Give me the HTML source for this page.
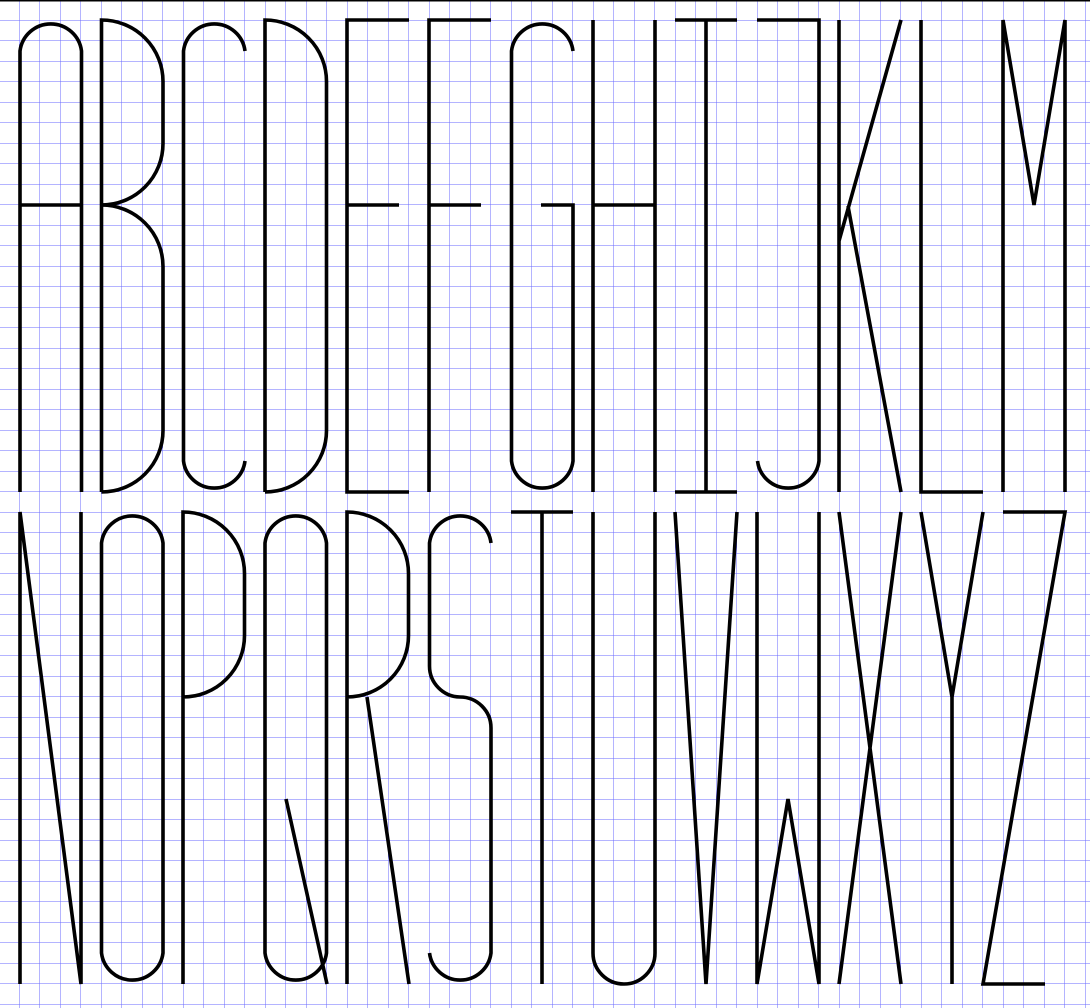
<!DOCTYPE html>
<html><head><meta charset="utf-8"><style>
html,body{margin:0;padding:0;background:#fff;width:1090px;height:1008px;overflow:hidden}
svg{display:block}
</style></head><body>
<svg width="1090" height="1008" viewBox="0 0 1090 1008" xmlns="http://www.w3.org/2000/svg">
<defs>
<pattern id="g" x="19" y="20" width="20.5" height="20.5" patternUnits="userSpaceOnUse">
<path d="M0 0V20.5M0 0H20.5" stroke="#6a6aff" stroke-width="1" fill="none"/>
</pattern>
</defs>
<rect width="1090" height="1008" fill="#fff"/>
<rect width="1090" height="1008" fill="url(#g)"/>
<rect x="0" y="0" width="1090" height="1.5" fill="#000"/>
<g fill="none" stroke="#000" stroke-width="3.6" stroke-linejoin="miter">
<path d="M20 492V51A31 31 0 0 1 81.5 51V492M20 205H81.5"/>
<path d="M101.5 492V20A61.5 61.5 0 0 1 163 81.5V143.5A61.5 61.5 0 0 1 101.5 205A61.5 61.5 0 0 1 163 266.5V430.5A61.5 61.5 0 0 1 101.5 492"/>
<path d="M245 51A31 31 0 0 0 183.5 51V461A31 31 0 0 0 245 461"/>
<path d="M265 492V20A61.5 61.5 0 0 1 326.5 81.5V430.5A61.5 61.5 0 0 1 265 492"/>
<path d="M409 20H347V492H409M347 205H399"/>
<path d="M491 20H429V492M429 205H481"/>
<path d="M573 51A31 31 0 0 0 511.5 51V461A31 31 0 0 0 573 461V205H541"/>
<path d="M593 20V492M655 20V492M593 205H655"/>
<path d="M675 20H737M675 492H737M706 20V492"/>
<path d="M757 20H819V461A31 31 0 0 1 757.5 461"/>
<path d="M839 20V492M901 20L839 241M848 206L901 492"/>
<path d="M921 20V492H983"/>
<path d="M1003 492V20L1034 205L1065 20V492"/>

<path d="M20 984V512L81 984V512"/>
<path d="M101.5 543A31 31 0 0 1 163 543V953A31 31 0 0 1 101.5 953Z"/>
<path d="M183 984V512A61.5 61.5 0 0 1 244.5 573.5V635.5A61.5 61.5 0 0 1 183 697"/>
<path d="M265 543A31 31 0 0 1 326.5 543V953A31 31 0 0 1 265 953Z M286 799L327 984"/>
<path d="M347 984V512A61.5 61.5 0 0 1 408.5 573.5V635.5A61.5 61.5 0 0 1 347 697M367 697L409 984"/>
<path d="M491 543A31 31 0 0 0 429.5 543V666A31 31 0 0 0 460 697A31 31 0 0 1 491 728V953A31 31 0 0 1 429.5 953"/>
<path d="M511 512H573M542 512V984"/>
<path d="M593 512V953A31 31 0 0 0 655 953V512"/>
<path d="M675 512L706 984L737 512"/>
<path d="M757 512V984L788 799L819 984V512"/>
<path d="M839 984L901 512M839 512L901 984"/>
<path d="M921 512L952 697L983 512M952 697V984"/>
<path d="M1003 512H1065L983 984H1045"/>
</g>
</svg>
</body></html>
